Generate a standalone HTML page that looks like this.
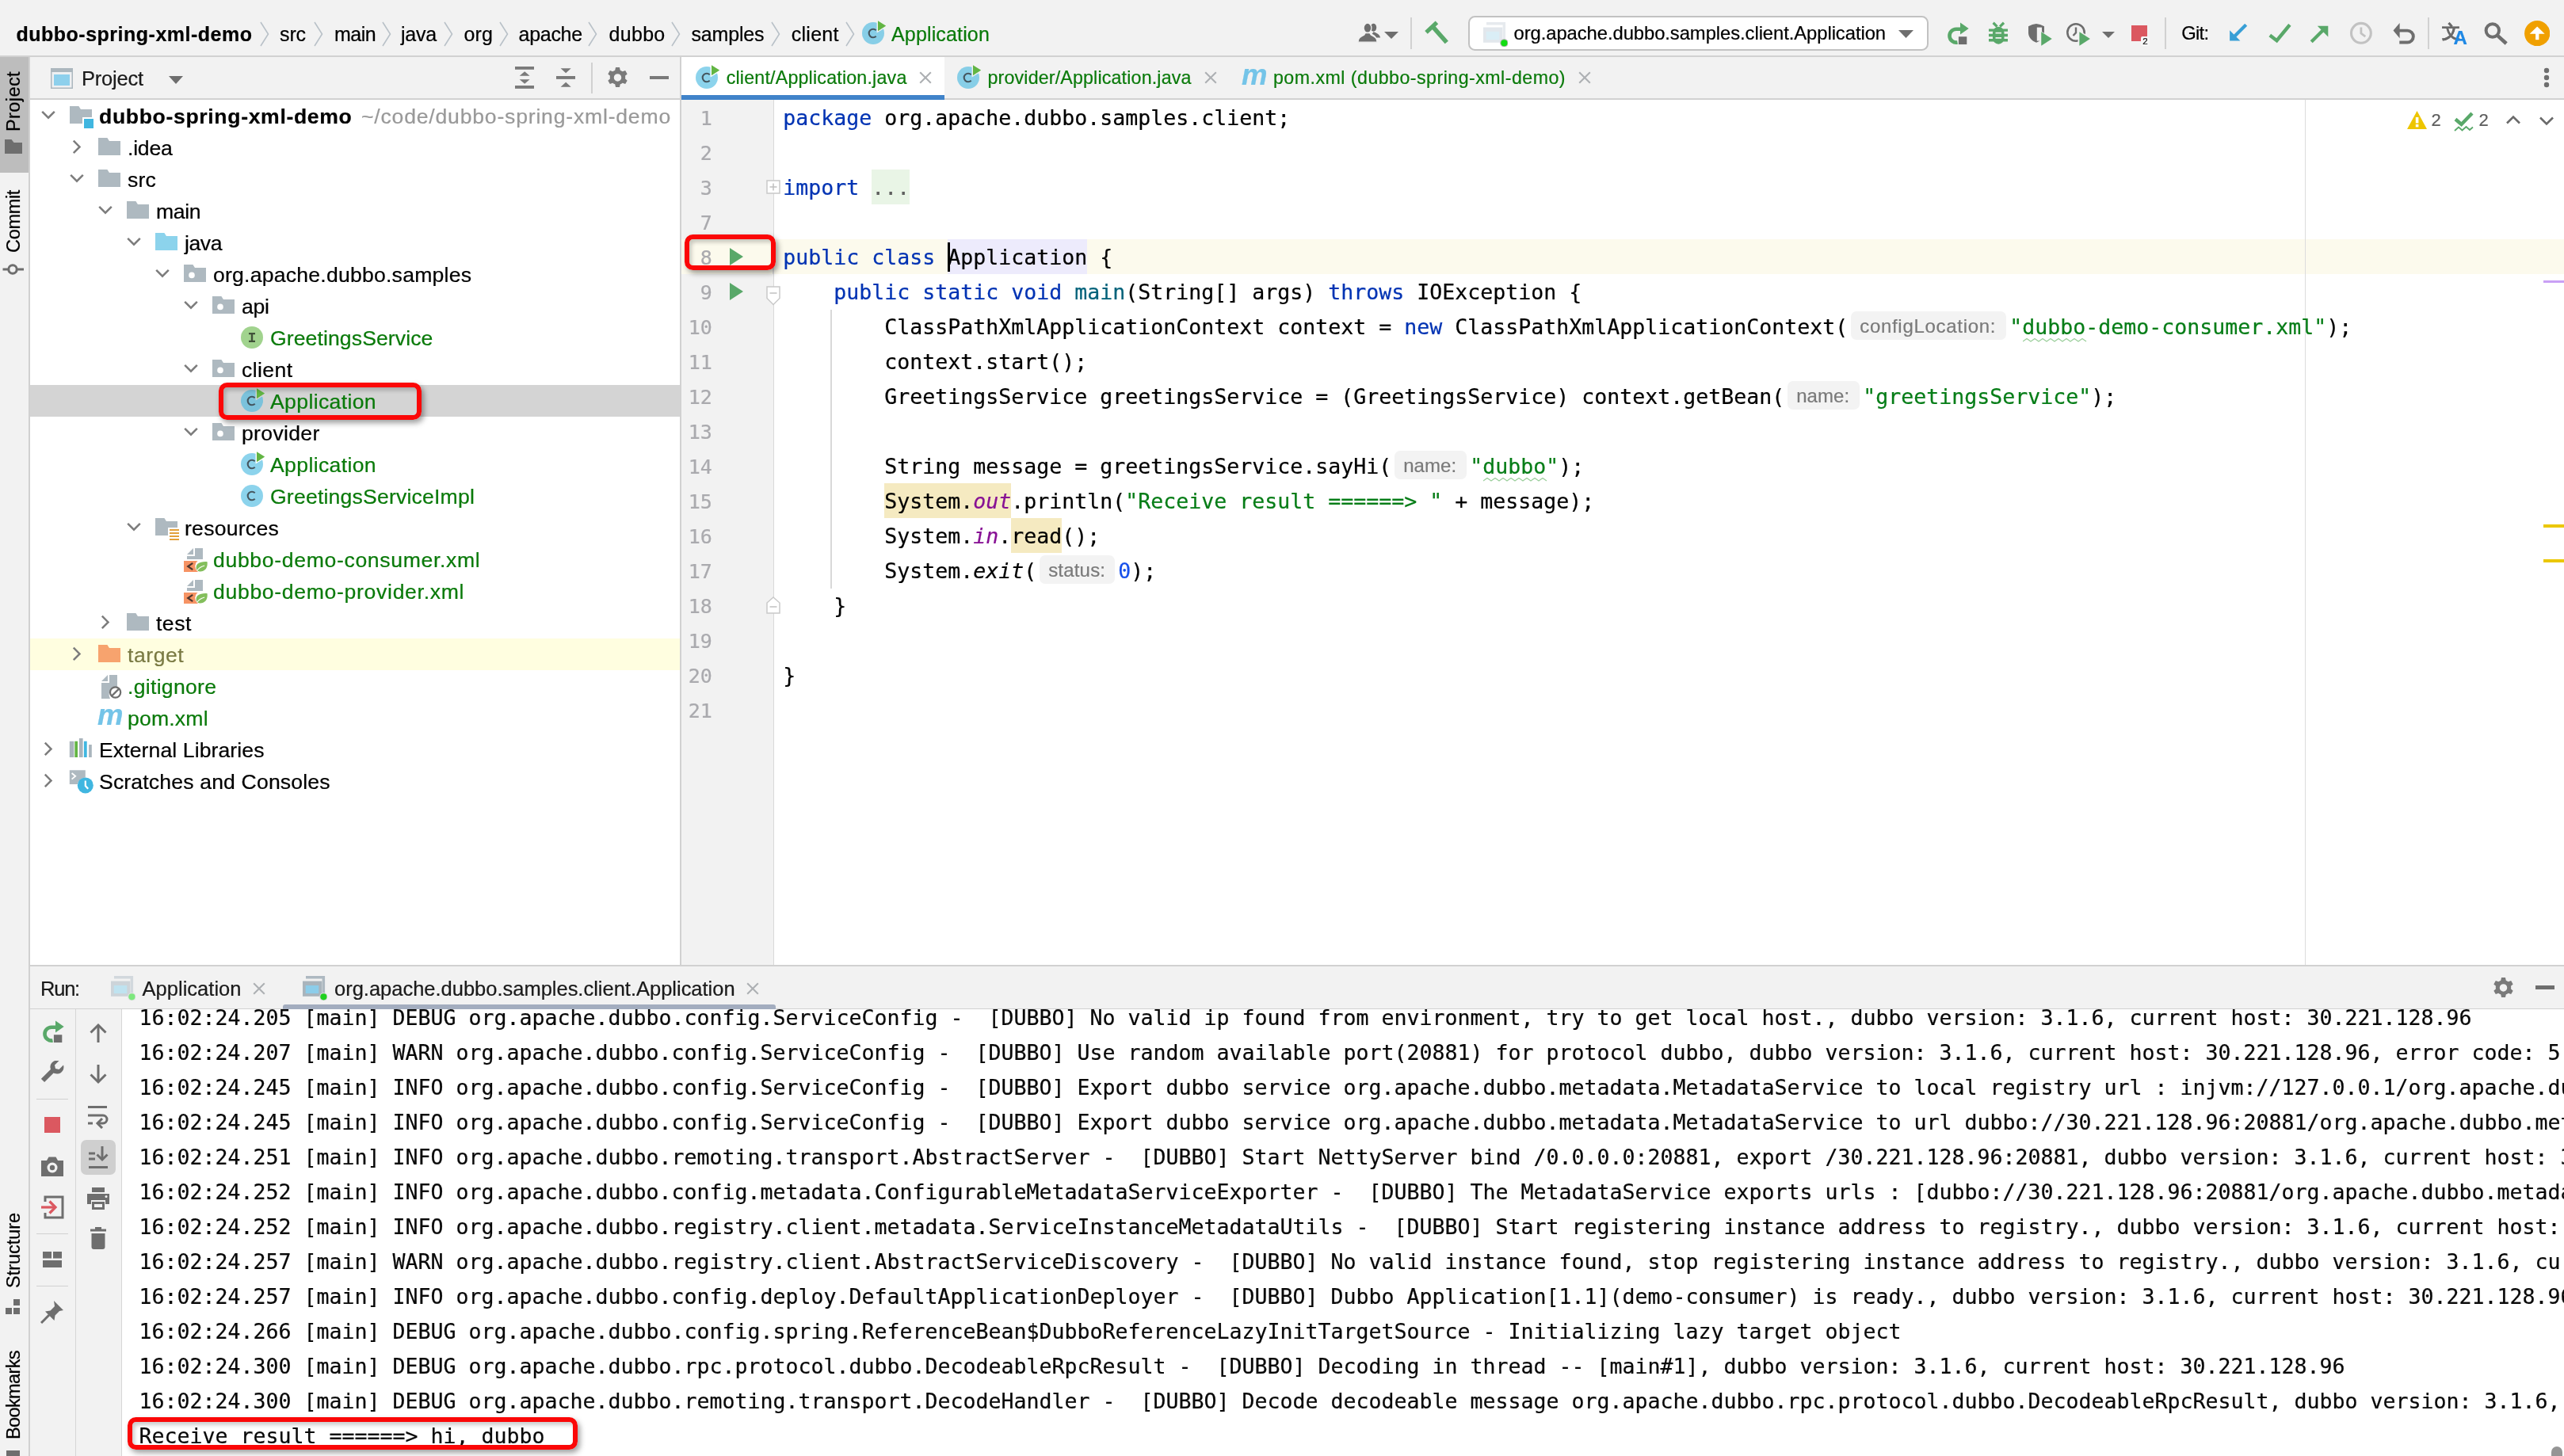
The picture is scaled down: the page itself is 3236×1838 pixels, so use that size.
<!DOCTYPE html>
<html lang="en"><head><meta charset="utf-8"><title>dubbo-spring-xml-demo – Application.java</title>
<style>
html,body{margin:0;padding:0}
body{width:3236px;height:1838px;position:relative;overflow:hidden;background:#fff;font-family:"Liberation Sans", Arial, sans-serif;color:#000}
div,span,svg,header,nav,aside,main,section{position:absolute;box-sizing:border-box}
header,nav,aside,main,section{left:0;top:0;width:0;height:0}
span{white-space:pre;-webkit-text-stroke:.22px}
.s{font-family:"Liberation Sans", Arial, sans-serif}
.m{font-family:"DejaVu Sans Mono", "Liberation Mono", monospace}
.app{left:0;top:0;width:3236px;height:1838px;overflow:hidden;will-change:transform}
.redbox{border:6px solid #fb0707;border-radius:10.500px;box-shadow:3px 4px 7px rgba(0,0,0,.38), inset 3px 4px 5px rgba(0,0,0,.2)}
.hint{background:#f3f3f3;border-radius:7px}
</style></head>
<body>
<svg width="0" height="0" style="position:absolute;left:-10px;top:-10px"><defs><mask id="mkRun" maskUnits="userSpaceOnUse" x="0" y="0" width="16" height="16"><rect width="16" height="16" fill="#fff"/><path d="M10.3 -1.1L17.4 3.35L10.3 7.8z" fill="#000"/></mask><symbol id="folder" viewBox="0 0 16 16"><path fill="#9AA7B0" fill-opacity=".8" d="M1 13h14V4H7.98L6.7 2H1z"/></symbol><symbol id="folderBlue" viewBox="0 0 16 16"><path fill="#40B6E0" fill-opacity=".6" d="M1 13h14V4H7.98L6.7 2H1z"/></symbol><symbol id="folderOrange" viewBox="0 0 16 16"><path fill="#F26522" fill-opacity=".6" d="M1 13h14V4H7.98L6.7 2H1z"/></symbol><symbol id="pkg" viewBox="0 0 16 16"><path fill="#9AA7B0" fill-opacity=".8" fill-rule="evenodd" d="M1 13h14V4H7.98L6.7 2H1zM6 10.6a1.9 1.9 0 1 0 0-3.8a1.9 1.9 0 0 0 0 3.8z"/></symbol><symbol id="module" viewBox="0 0 16 16"><path fill="#9AA7B0" fill-opacity=".8" d="M1 13h8V9h6V4H7.98L6.7 2H1z"/><rect x="10" y="10" width="6" height="6" fill="#40B6E0"/></symbol><symbol id="res" viewBox="0 0 16 16"><path fill="#9AA7B0" fill-opacity=".8" d="M1 13h8V8h6V4H7.98L6.7 2H1z"/><path fill="#E2A03B" d="M10 9h6v1h-6zM10 11h6v1h-6zM10 13h6v1h-6zM10 15h6v1h-6z"/></symbol><symbol id="cls" viewBox="0 0 16 16"><circle cx="8" cy="8" r="7" fill="#40B6E0" fill-opacity=".6"/><path d="M9.85 6.1A2.65 2.65 0 1 0 9.85 9.9" fill="none" stroke="#3a4147" stroke-opacity=".85" stroke-width="1.05"/></symbol><symbol id="clsRun" viewBox="0 0 16 16"><g mask="url(#mkRun)"><circle cx="8" cy="8" r="7" fill="#40B6E0" fill-opacity=".6"/><path d="M9.85 6.1A2.65 2.65 0 1 0 9.85 9.9" fill="none" stroke="#3a4147" stroke-opacity=".85" stroke-width="1.05"/></g><path d="M11 0.1L16.1 3.35L11 6.6z" fill="#62B543"/></symbol><symbol id="iface" viewBox="0 0 16 16"><circle cx="8" cy="8" r="7" fill="#62B543" fill-opacity=".6"/><path d="M6 5h4v1.1H8.6v3.8H10V11H6V9.9h1.4V6.1H6z" fill="#2f3b2a" fill-opacity=".85"/></symbol><symbol id="chevD" viewBox="0 0 16 16"><path d="M4.1 5.45L8 9.35L11.9 5.45" fill="none" stroke="#7c7c7c" stroke-width="1.25"/></symbol><symbol id="chevR" viewBox="0 0 16 16"><path d="M5.9 3.85L9.75 7.7L5.9 11.55" fill="none" stroke="#7c7c7c" stroke-width="1.25"/></symbol><symbol id="closeX" viewBox="0 0 16 16"><path d="M4.6 4.6l6.8 6.8M11.4 4.6l-6.8 6.8" fill="none" stroke="#adb0b3" stroke-width="1.05"/></symbol><symbol id="xmlSpring" viewBox="0 0 16 16"><path fill="#9AA7B0" fill-opacity=".8" d="M7 1L3 5h4zM8 1v5H3v2h10V1z"/><rect x="1" y="9" width="9" height="7" fill="#F26522" fill-opacity=".7"/><path d="M6.6 10.4L3.6 12.5L6.6 14.6" fill="none" stroke="#231F20" stroke-opacity=".8" stroke-width="1.1"/><circle cx="12.3" cy="12.4" r="4.2" fill="#fff"/><path d="M8.9 14.2c-.6-2.6 1.2-5 6.9-4.6c.4 3.6-1.2 6.2-4.6 6.1c-1 0-1.8-.5-2.3-1.500z" fill="#6DB33F" fill-opacity=".85"/><path d="M9.3 15c1.200-1.500 2.800-2.500 4.800-3" stroke="#fff" stroke-width=".6" fill="none"/></symbol><symbol id="gitignore" viewBox="0 0 16 16"><path fill="#9AA7B0" fill-opacity=".8" d="M7 1L3 5h4zM8 1v5H3v10h5.500a4.600 4.600 0 0 1 4.500-6.900V1z"/><circle cx="11.800" cy="12" r="3.300" fill="none" stroke="#6E6E6E" stroke-width="1.100"/><path d="M9.500 14.300l4.600-4.600" stroke="#6E6E6E" stroke-width="1.100"/></symbol><symbol id="libs" viewBox="0 0 16 16"><path fill="#9AA7B0" fill-opacity=".85" d="M0.900 2.850h2.800V13H0.900zM6.950 1h2.350v12H6.950zM13.050 5h1.850v8h-1.850z"/><path fill="#62B543" d="M4.150 2.850H6V13H4.150z"/><path fill="#40B6E0" d="M9.950 2.850h1.900V13h-1.900z"/></symbol><symbol id="scratch" viewBox="0 0 16 16"><path fill="#9AA7B0" fill-opacity=".8" d="M0.900 1.100h10V5.700a5 5 0 0 0-4.900 4.300H0.900z"/><path d="M2.300 3l2.300 1.900l-2.300 1.900" fill="none" stroke="#fff" stroke-width=".9"/><circle cx="10.900" cy="10.700" r="5" fill="#40B6E0"/><path d="M10.900 7.800v3.200l1.700 1.900" fill="none" stroke="#fff" stroke-width="1.100"/></symbol><symbol id="runCfg" viewBox="0 0 16 16"><path d="M2.500 0.550H14.550V11.700H12.800V2.300H2.500z" fill="#AEB9C1"/><path d="M0.500 3.750H12.650V13.400H0.500z" fill="#A9B4BC"/><rect x="2.350" y="6.450" width="8.300" height="5.100" fill="#8CCDEA"/><circle cx="13.700" cy="13.650" r="2.600" fill="#d9dadb"/><circle cx="13.700" cy="13.650" r="2.050" fill="#1FD01F"/></symbol><symbol id="runCfgPale" viewBox="0 0 16 16"><path d="M2.500 0.550H14.550V11.700H12.800V2.300H2.500z" fill="#D2D8DD"/><path d="M0.500 3.750H12.650V13.400H0.500z" fill="#CDD4D9"/><rect x="2.350" y="6.450" width="8.300" height="5.100" fill="#BFE3F0"/><circle cx="13.700" cy="13.650" r="2.600" fill="#e1e2e3"/><circle cx="13.700" cy="13.650" r="2.050" fill="#7EE87E"/></symbol><symbol id="runCfgDim" viewBox="0 0 16 16"><path d="M2.500 0.550H14.550V11.700H12.800V2.300H2.500z" fill="#E6EAEE"/><path d="M0.500 3.750H12.650V13.400H0.500z" fill="#E2E7EC"/><rect x="2.350" y="6.450" width="8.300" height="5.100" fill="#DAEEF6"/><circle cx="13.700" cy="13.650" r="2.600" fill="#b9b9b9"/><circle cx="13.700" cy="13.650" r="2.050" fill="#12DD12"/></symbol><symbol id="gear" viewBox="0 0 16 16"><path fill="#7a7a7a" fill-rule="evenodd" d="M9.200 1.500l.4 1.800c.5.2 1 .4 1.400.8l1.700-.6l1.200 2.100l-1.300 1.200c.1.300.1.500.1.800s0 .5-.1.800l1.300 1.200l-1.200 2.100l-1.700-.6c-.4.400-.9.600-1.400.8l-.4 1.800H6.800l-.4-1.800c-.5-.2-1-.4-1.400-.8l-1.700.6l-1.200-2.100l1.300-1.200C3.300 8.100 3.300 7.900 3.300 7.600s0-.5.1-.8L2.100 5.600l1.200-2.100l1.700.6c.4-.4.900-.6 1.400-.8l.4-1.800zM8 10.100a2.300 2.300 0 1 0 0-4.600a2.300 2.300 0 0 0 0 4.600z" transform="translate(0 .4)"/></symbol><symbol id="minus" viewBox="0 0 16 16"><rect x="2" y="7.300" width="12" height="1.500" fill="#6E6E6E"/></symbol></defs></svg>
<div class="app"><header id="navbar"><div style="left:0px;top:0px;width:3236px;height:72px;background:#f2f2f2;border-bottom:2px solid #d1d1d1;"></div><span class="s" id="t1" style="left:20.5px;top:27.84px;font-size:25px;line-height:31px;font-weight:bold;letter-spacing:0.501px;">dubbo-spring-xml-demo</span><span class="s" id="t2" style="left:353px;top:27.84px;font-size:25px;line-height:31px;letter-spacing:-0.109px;">src</span><span class="s" id="t3" style="left:422px;top:27.84px;font-size:25px;line-height:31px;letter-spacing:-0.547px;">main</span><span class="s" id="t4" style="left:506px;top:27.84px;font-size:25px;line-height:31px;letter-spacing:-0.219px;">java</span><span class="s" id="t5" style="left:585.5px;top:27.84px;font-size:25px;line-height:31px;letter-spacing:0.120px;">org</span><span class="s" id="t6" style="left:654.6px;top:27.84px;font-size:25px;line-height:31px;letter-spacing:-0.305px;">apache</span><span class="s" id="t7" style="left:768.5px;top:27.84px;font-size:25px;line-height:31px;letter-spacing:0.314px;">dubbo</span><span class="s" id="t8" style="left:872.4px;top:27.84px;font-size:25px;line-height:31px;letter-spacing:-0.156px;">samples</span><span class="s" id="t9" style="left:998.8px;top:27.84px;font-size:25px;line-height:31px;letter-spacing:0.254px;">client</span><svg style="left:327.5px;top:27px;" width="12" height="32" viewBox="0 0 12 32"><path d="M1 1L10.500 16L1 31" fill="none" stroke="#b9c1c8" stroke-width="1.600"/></svg><svg style="left:396px;top:27px;" width="12" height="32" viewBox="0 0 12 32"><path d="M1 1L10.500 16L1 31" fill="none" stroke="#b9c1c8" stroke-width="1.600"/></svg><svg style="left:481.5px;top:27px;" width="12" height="32" viewBox="0 0 12 32"><path d="M1 1L10.500 16L1 31" fill="none" stroke="#b9c1c8" stroke-width="1.600"/></svg><svg style="left:559.5px;top:27px;" width="12" height="32" viewBox="0 0 12 32"><path d="M1 1L10.500 16L1 31" fill="none" stroke="#b9c1c8" stroke-width="1.600"/></svg><svg style="left:629.5px;top:27px;" width="12" height="32" viewBox="0 0 12 32"><path d="M1 1L10.500 16L1 31" fill="none" stroke="#b9c1c8" stroke-width="1.600"/></svg><svg style="left:742px;top:27px;" width="12" height="32" viewBox="0 0 12 32"><path d="M1 1L10.500 16L1 31" fill="none" stroke="#b9c1c8" stroke-width="1.600"/></svg><svg style="left:846.5px;top:27px;" width="12" height="32" viewBox="0 0 12 32"><path d="M1 1L10.500 16L1 31" fill="none" stroke="#b9c1c8" stroke-width="1.600"/></svg><svg style="left:972.9px;top:27px;" width="12" height="32" viewBox="0 0 12 32"><path d="M1 1L10.500 16L1 31" fill="none" stroke="#b9c1c8" stroke-width="1.600"/></svg><svg style="left:1066.5px;top:27px;" width="12" height="32" viewBox="0 0 12 32"><path d="M1 1L10.500 16L1 31" fill="none" stroke="#b9c1c8" stroke-width="1.600"/></svg><svg style="left:1086px;top:26px" width="32" height="32"><use href="#clsRun"/></svg><span class="s" id="t10" style="left:1125px;top:27.84px;font-size:25px;line-height:31px;color:#0a7a0a;letter-spacing:0.153px;">Application</span><svg style="left:1712px;top:26px;" width="32" height="32" viewBox="0 0 32 32"><g fill="#6E6E6E"><ellipse cx="21.500" cy="8.800" rx="3.700" ry="5"/><path d="M21.500 14.200c4.500 1.600 8 3.200 8.600 7.400h-5c-1-2.400-2.800-3.800-5.400-4.900z"/></g><g fill="#6E6E6E" stroke="#f2f2f2" stroke-width="1.300"><ellipse cx="14" cy="9.300" rx="4.900" ry="6.100"/><path d="M1.900 27.200c0-5 3-7 8-9.400l1.400-2.300h5.400l1.400 2.300c5 2.400 8 4.400 8 9.400z"/></g></svg><svg style="left:1747px;top:40px;" width="18" height="9" viewBox="0 0 18 9"><path d="M0 0h18l-9 9z" fill="#6E6E6E"/></svg><div style="left:1780px;top:22px;width:2px;height:39.5px;background:#d1d1d1;"></div><svg style="left:1796px;top:26px;" width="34" height="32" viewBox="0 0 34 32"><path d="M4 14.900L17.400 2.400" stroke="#59A869" stroke-width="5.200" fill="none"/><path d="M12.900 8.300L29.800 27.500" stroke="#59A869" stroke-width="5.600" fill="none"/></svg><div style="left:1852.5px;top:20px;width:581px;height:44px;background:#fff;border:2px solid #c2c2c2;border-radius:8.500px;"></div><svg style="left:1871px;top:26.8px" width="32" height="32"><use href="#runCfgDim"/></svg><span class="s" id="t11" style="left:1910.5px;top:27.25px;font-size:23.8px;line-height:30px;letter-spacing:-0.065px;">org.apache.dubbo.samples.client.Application</span><svg style="left:2396px;top:38px;" width="19" height="10" viewBox="0 0 19 10"><path d="M0 0h19l-9.500 10z" fill="#6E6E6E"/></svg><svg style="left:2456px;top:27px;" width="32" height="32" viewBox="0 0 32 32"><path d="M18.500 9.750H12.900A8.450 8.450 0 1 0 14.500 26.500" fill="none" stroke="#59A869" stroke-width="4.600"/><path d="M18 1.500L28.700 9L18 16.500z" fill="#59A869"/><rect x="15.900" y="19.250" width="10.400" height="9.800" fill="#6E6E6E"/></svg><svg style="left:2507px;top:26px;" width="32" height="32" viewBox="0 0 32 32"><g fill="#59A869"><path d="M8 15a7.250 7.250 0 0 1 14.500 0v7.500a7.250 7.250 0 0 1-14.500 0z"/><path d="M3 10.500h24v3.300H3zM3 16.800h24v3.400H3zM3 23h24v3.400H3z"/></g><path d="M8.600 2.750L13.500 7.600M22 2.750L17.100 7.600" stroke="#59A869" stroke-width="3.200" fill="none"/><path d="M11.500 14.700h7.500v1.700h-7.500zM11.500 21h7.500v1.700h-7.500z" fill="#f2f2f2"/></svg><svg style="left:2558px;top:26px;" width="34" height="34" viewBox="0 0 34 34"><path d="M2 7.200Q7 4.300 12 4Q17 4.300 22 7.200V15c0 6-4 10.500-10 12.800C6 25.500 2 21 2 15z" fill="#6E6E6E"/><path d="M12.800 8.600h6.200v17h-6.200z" fill="#f2f2f2"/><path d="M16.500 12.500L33.500 23L16.500 33.500z" fill="#f2f2f2"/><path d="M18.250 14.200L31.750 23L18.250 31.800z" fill="#59A869"/></svg><svg style="left:2607px;top:26px;" width="34" height="34" viewBox="0 0 34 34"><circle cx="13" cy="15" r="10.700" fill="none" stroke="#6E6E6E" stroke-width="2.600"/><path d="M13 8.500V15.300L9.500 19" fill="none" stroke="#6E6E6E" stroke-width="2.400"/><path d="M15.500 11.500L34 23L15.500 34z" fill="#f2f2f2"/><path d="M17.400 14.200L30.900 23L17.400 31.800z" fill="#59A869"/></svg><svg style="left:2652.5px;top:40px;" width="16" height="8" viewBox="0 0 16 8"><path d="M0 0h16l-8 8z" fill="#6E6E6E"/></svg><div style="left:2690.3px;top:32.25px;width:19.7px;height:19.7px;background:#DB5860;"></div><div style="left:2702px;top:45.5px;width:11px;height:12px;background:#f7f7f7;border-radius:2px;"></div><span class="s" style="left:2704.3px;top:44.62px;font-size:11.5px;line-height:14px;color:#111;">2</span><div style="left:2732px;top:22px;width:2px;height:39.5px;background:#d1d1d1;"></div><span class="s" id="t12" style="left:2753.2px;top:26.75px;font-size:23.8px;line-height:30px;letter-spacing:-0.708px;">Git:</span><svg style="left:2812px;top:30px;" width="26" height="26" viewBox="0 0 26 26"><path d="M22.700 1.300L8 16" stroke="#389FD6" stroke-width="4.200" fill="none"/><path d="M2.100 8.300V21.600H15.400z" fill="#389FD6"/></svg><svg style="left:2863px;top:30px;" width="30" height="26" viewBox="0 0 30 26"><path d="M1.800 14.600L10.500 21.200L26.900 1.300" stroke="#59A869" stroke-width="4.400" fill="none"/></svg><svg style="left:2915px;top:30px;" width="26" height="26" viewBox="0 0 26 26"><path d="M2.200 22.700L17 8" stroke="#59A869" stroke-width="4.200" fill="none"/><path d="M9.800 2.800H23.300V16.400z" fill="#59A869"/></svg><svg style="left:2964px;top:26px;" width="32" height="32" viewBox="0 0 32 32"><circle cx="15.900" cy="15.800" r="12.400" fill="none" stroke="#c2c2c2" stroke-width="3.100"/><path d="M15.900 8.500v7.600l5.400 4" fill="none" stroke="#c2c2c2" stroke-width="2.800"/></svg><svg style="left:3018px;top:26px;" width="32" height="32" viewBox="0 0 32 32"><path d="M10 12.600h10.400a7.450 7.450 0 0 1 0 14.900H10.300" fill="none" stroke="#6E6E6E" stroke-width="3.900"/><path d="M2.500 12.600L10.600 3V22.200z" fill="#6E6E6E"/></svg><div style="left:3064px;top:22px;width:2px;height:39.5px;background:#d1d1d1;"></div><span class="s" style="left:3081.5px;top:26.03px;font-size:23px;line-height:29px;color:#6a6a6a;font-weight:bold;font-family:"Noto Sans CJK SC","Liberation Sans",sans-serif;">文</span><span class="s" style="left:3096.5px;top:32.68px;font-size:24px;line-height:30px;color:#1e88e5;font-weight:bold;">A</span><svg style="left:3133px;top:26px;" width="32" height="32" viewBox="0 0 32 32"><circle cx="12.800" cy="12.500" r="8.200" fill="none" stroke="#6E6E6E" stroke-width="4"/><path d="M18.800 18.600L30.200 29" stroke="#6E6E6E" stroke-width="4.600"/></svg><svg style="left:3186px;top:25.8px;" width="32.4" height="32.4" viewBox="0 0 32.4 32.4"><circle cx="16.200" cy="16.200" r="16.100" fill="#F0A000"/><path d="M14.100 13.200h4.300v11h-4.300z" fill="#fff"/><path d="M6.700 16.700L16.200 7.400L25.700 16.700z" fill="#fff"/></svg></header>
<nav id="left-stripe"><div style="left:0px;top:72px;width:38px;height:1766px;background:#f2f2f2;border-right:2px solid #d1d1d1;"></div><div style="left:0px;top:72px;width:36px;height:146px;background:#bdbdbd;"></div><span class="s" id="t13" style="left:1.500px;top:166px;font-size:23.5px;line-height:30px;transform-origin:0 0;transform:rotate(-90deg);letter-spacing:0.408px;">Project</span><svg style="left:6px;top:176px;" width="22" height="18" viewBox="0 0 22 18"><path d="M0 0h8.500l3 4H22v14H0z" fill="#6E6E6E"/></svg><span class="s" id="t14" style="left:1.500px;top:319px;font-size:23.5px;line-height:30px;transform-origin:0 0;transform:rotate(-90deg);letter-spacing:-0.326px;">Commit</span><svg style="left:3px;top:330px;" width="30" height="22" viewBox="0 0 30 22"><circle cx="13" cy="10" r="5.200" fill="none" stroke="#6E6E6E" stroke-width="3"/><path d="M0.500 10h7.300M18.200 10h8.800" stroke="#6E6E6E" stroke-width="3"/></svg><span class="s" id="t15" style="left:1.500px;top:1626px;font-size:23.5px;line-height:30px;transform-origin:0 0;transform:rotate(-90deg);letter-spacing:-0.038px;">Structure</span><svg style="left:7px;top:1640px;" width="20" height="20" viewBox="0 0 20 20"><g fill="#6E6E6E"><rect x="10" y="0" width="8" height="8"/><rect x="0" y="11" width="8" height="8"/><rect x="10" y="11" width="8" height="8"/></g></svg><span class="s" id="t16" style="left:1.500px;top:1817px;font-size:23.5px;line-height:30px;transform-origin:0 0;transform:rotate(-90deg);letter-spacing:-0.616px;">Bookmarks</span><svg style="left:7px;top:1831px;" width="20" height="10" viewBox="0 0 20 10"><rect x="1" y="0" width="17" height="10" fill="#6E6E6E"/></svg></nav>
<aside id="project-view"><div style="left:38px;top:72px;width:820px;height:54px;background:#f2f2f2;border-bottom:2px solid #d1d1d1;"></div><svg style="left:64px;top:86px;" width="28" height="26" viewBox="0 0 28 26"><rect x="0" y="0" width="28" height="26" fill="#9AA7B0" fill-opacity=".8"/><rect x="1.500" y="5" width="25" height="19.500" fill="#eef0f2"/><rect x="4" y="8" width="20" height="14" fill="#8dd0ec"/></svg><span class="s" id="t17" style="left:103px;top:82.66px;font-size:25.5px;line-height:32px;color:#1a1a1a;letter-spacing:-0.196px;">Project</span><svg style="left:213px;top:96px;" width="18" height="10" viewBox="0 0 18 10"><path d="M0 0h18l-9 10z" fill="#6E6E6E"/></svg><svg style="left:650px;top:83px;" width="24" height="30" viewBox="0 0 24 30"><g fill="#7a7a7a"><rect x="0" y="1" width="24" height="3.800"/><rect x="0" y="25" width="24" height="3.900"/><path d="M5.700 12.700L12.150 7.200L18.600 12.700zM5.700 17.200L12.150 22.700L18.600 17.200z"/></g></svg><svg style="left:702px;top:85px;" width="24" height="26" viewBox="0 0 24 26"><g fill="#7a7a7a"><rect x="0" y="11" width="24" height="3.900"/><path d="M5.600 1.200H18.700L12.150 7.200zM5.600 24.700H18.700L12.150 18.700z"/></g></svg><div style="left:746px;top:79px;width:2px;height:39px;background:#d1d1d1;"></div><svg style="left:763.4px;top:81px" width="33" height="33"><use href="#gear"/></svg><div style="left:820px;top:95.7px;width:24px;height:4.3px;background:#7a7a7a;"></div><div style="left:38px;top:126px;width:820px;height:1092px;background:#fff;"></div><svg style="left:45px;top:130px" width="32" height="32"><use href="#chevD"/></svg><svg style="left:86px;top:130px" width="32" height="32"><use href="#module"/></svg><span class="s" id="t18" style="left:125px;top:130.58px;font-size:26.6px;line-height:33px;font-weight:bold;letter-spacing:0.652px;">dubbo-spring-xml-demo</span><span class="s" id="t19" style="left:456px;top:130.58px;font-size:26.6px;line-height:33px;color:#999;letter-spacing:0.792px;">~/code/dubbo-spring-xml-demo</span><svg style="left:81px;top:170px" width="32" height="32"><use href="#chevR"/></svg><svg style="left:122px;top:170px" width="32" height="32"><use href="#folder"/></svg><span class="s" id="t20" style="left:161px;top:170.58px;font-size:26.6px;line-height:33px;letter-spacing:-0.234px;">.idea</span><svg style="left:81px;top:210px" width="32" height="32"><use href="#chevD"/></svg><svg style="left:122px;top:210px" width="32" height="32"><use href="#folder"/></svg><span class="s" id="t21" style="left:161px;top:210.58px;font-size:26.6px;line-height:33px;letter-spacing:0.182px;">src</span><svg style="left:117px;top:250px" width="32" height="32"><use href="#chevD"/></svg><svg style="left:158px;top:250px" width="32" height="32"><use href="#folder"/></svg><span class="s" id="t22" style="left:197px;top:250.58px;font-size:26.6px;line-height:33px;letter-spacing:-0.364px;">main</span><svg style="left:153px;top:290px" width="32" height="32"><use href="#chevD"/></svg><svg style="left:194px;top:290px" width="32" height="32"><use href="#folderBlue"/></svg><span class="s" id="t23" style="left:233px;top:290.58px;font-size:26.6px;line-height:33px;letter-spacing:-0.449px;">java</span><svg style="left:189px;top:330px" width="32" height="32"><use href="#chevD"/></svg><svg style="left:230px;top:330px" width="32" height="32"><use href="#pkg"/></svg><span class="s" id="t24" style="left:269px;top:330.58px;font-size:26.6px;line-height:33px;letter-spacing:0.224px;">org.apache.dubbo.samples</span><svg style="left:225px;top:370px" width="32" height="32"><use href="#chevD"/></svg><svg style="left:266px;top:370px" width="32" height="32"><use href="#pkg"/></svg><span class="s" id="t25" style="left:305px;top:370.58px;font-size:26.6px;line-height:33px;letter-spacing:-0.333px;">api</span><svg style="left:302px;top:410px" width="32" height="32"><use href="#iface"/></svg><span class="s" id="t26" style="left:341px;top:410.58px;font-size:26.6px;line-height:33px;color:#0a7a0a;letter-spacing:0.095px;">GreetingsService</span><svg style="left:225px;top:450px" width="32" height="32"><use href="#chevD"/></svg><svg style="left:266px;top:450px" width="32" height="32"><use href="#pkg"/></svg><span class="s" id="t27" style="left:305px;top:450.58px;font-size:26.6px;line-height:33px;letter-spacing:0.401px;">client</span><div style="left:38px;top:486px;width:820px;height:40px;background:#d4d4d4;"></div><svg style="left:302px;top:490px" width="32" height="32"><use href="#clsRun"/></svg><span class="s" id="t28" style="left:341px;top:490.58px;font-size:26.6px;line-height:33px;color:#0a7a0a;letter-spacing:0.354px;">Application</span><svg style="left:225px;top:530px" width="32" height="32"><use href="#chevD"/></svg><svg style="left:266px;top:530px" width="32" height="32"><use href="#pkg"/></svg><span class="s" id="t29" style="left:305px;top:530.58px;font-size:26.6px;line-height:33px;letter-spacing:0.315px;">provider</span><svg style="left:302px;top:570px" width="32" height="32"><use href="#clsRun"/></svg><span class="s" id="t30" style="left:341px;top:570.58px;font-size:26.6px;line-height:33px;color:#0a7a0a;letter-spacing:0.354px;">Application</span><svg style="left:302px;top:610px" width="32" height="32"><use href="#cls"/></svg><span class="s" id="t31" style="left:341px;top:610.58px;font-size:26.6px;line-height:33px;color:#0a7a0a;letter-spacing:0.189px;">GreetingsServiceImpl</span><svg style="left:153px;top:650px" width="32" height="32"><use href="#chevD"/></svg><svg style="left:194px;top:650px" width="32" height="32"><use href="#res"/></svg><span class="s" id="t32" style="left:233px;top:650.58px;font-size:26.6px;line-height:33px;letter-spacing:0.248px;">resources</span><svg style="left:230px;top:690px" width="32" height="32"><use href="#xmlSpring"/></svg><span class="s" id="t33" style="left:269px;top:690.58px;font-size:26.6px;line-height:33px;color:#0a7a0a;letter-spacing:0.659px;">dubbo-demo-consumer.xml</span><svg style="left:230px;top:730px" width="32" height="32"><use href="#xmlSpring"/></svg><span class="s" id="t34" style="left:269px;top:730.58px;font-size:26.6px;line-height:33px;color:#0a7a0a;letter-spacing:0.676px;">dubbo-demo-provider.xml</span><svg style="left:117px;top:770px" width="32" height="32"><use href="#chevR"/></svg><svg style="left:158px;top:770px" width="32" height="32"><use href="#folder"/></svg><span class="s" id="t35" style="left:197px;top:770.58px;font-size:26.6px;line-height:33px;letter-spacing:0.481px;">test</span><div style="left:38px;top:806px;width:820px;height:40px;background:#fffee0;"></div><svg style="left:81px;top:810px" width="32" height="32"><use href="#chevR"/></svg><svg style="left:122px;top:810px" width="32" height="32"><use href="#folderOrange"/></svg><span class="s" id="t36" style="left:161px;top:810.58px;font-size:26.6px;line-height:33px;color:#7a7a43;letter-spacing:0.547px;">target</span><svg style="left:122px;top:850px" width="32" height="32"><use href="#gitignore"/></svg><span class="s" id="t37" style="left:161px;top:850.58px;font-size:26.6px;line-height:33px;color:#0a7a0a;letter-spacing:0.289px;">.gitignore</span><span class="s" style="left:123px;top:880.35px;font-size:36.5px;line-height:46px;color:#74c4e8;font-weight:bold;font-style:italic;font-family:"DejaVu Sans","Liberation Sans",sans-serif;letter-spacing:-2px;">m</span><span class="s" id="t38" style="left:161px;top:890.58px;font-size:26.6px;line-height:33px;color:#0a7a0a;letter-spacing:0.188px;">pom.xml</span><svg style="left:45px;top:930px" width="32" height="32"><use href="#chevR"/></svg><svg style="left:86px;top:930px" width="32" height="32"><use href="#libs"/></svg><span class="s" id="t39" style="left:125px;top:930.58px;font-size:26.6px;line-height:33px;letter-spacing:0.092px;">External Libraries</span><svg style="left:45px;top:970px" width="32" height="32"><use href="#chevR"/></svg><svg style="left:86px;top:970px" width="32" height="32"><use href="#scratch"/></svg><span class="s" id="t40" style="left:125px;top:970.58px;font-size:26.6px;line-height:33px;letter-spacing:0.156px;">Scratches and Consoles</span><div class="redbox" style="left:275.8px;top:482.7px;width:256.6px;height:47px;"></div></aside>
<main id="editor"><div style="left:858px;top:72px;width:2378px;height:54px;background:#f2f2f2;border-bottom:2px solid #d1d1d1;border-left:2px solid #d1d1d1;"></div><div style="left:860px;top:72px;width:332px;height:48px;background:#fff;"></div><div style="left:860px;top:119.5px;width:332px;height:6px;background:#4083c9;"></div><svg style="left:876px;top:82px" width="32" height="32"><use href="#clsRun"/></svg><span class="s" id="t41" style="left:916.7px;top:84.46px;font-size:23.2px;line-height:29px;color:#0a7a0a;letter-spacing:0.209px;">client/Application.java</span><svg style="left:1152px;top:82px" width="32" height="32"><use href="#closeX"/></svg><svg style="left:1206px;top:82px" width="32" height="32"><use href="#clsRun"/></svg><span class="s" id="t42" style="left:1246.5px;top:84.46px;font-size:23.2px;line-height:29px;color:#0a7a0a;letter-spacing:0.178px;">provider/Application.java</span><svg style="left:1512px;top:82px" width="32" height="32"><use href="#closeX"/></svg><span class="s" style="left:1567px;top:72.35px;font-size:36.5px;line-height:46px;color:#74c4e8;font-weight:bold;font-style:italic;font-family:"DejaVu Sans","Liberation Sans",sans-serif;letter-spacing:-2px;">m</span><span class="s" id="t43" style="left:1607px;top:84.46px;font-size:23.2px;line-height:29px;color:#0a7a0a;letter-spacing:0.472px;">pom.xml (dubbo-spring-xml-demo)</span><svg style="left:1984px;top:82px" width="32" height="32"><use href="#closeX"/></svg><svg style="left:3209px;top:84px;" width="10" height="28" viewBox="0 0 10 28"><g fill="#6E6E6E"><circle cx="5" cy="5" r="3.200"/><circle cx="5" cy="14" r="3.200"/><circle cx="5" cy="23" r="3.200"/></g></svg><div style="left:858px;top:126px;width:2px;height:1092px;background:#d1d1d1;"></div><div style="left:860px;top:126px;width:116.8px;height:1092px;background:#f2f2f2;border-right:1.800px solid #d9d9d9;"></div><div style="left:860px;top:302.3px;width:2376px;height:44px;background:#fcfaed;"></div><div style="left:975px;top:302.3px;width:1.8px;height:44px;background:#d9d9d9;"></div><div style="left:2908.5px;top:126px;width:1.5px;height:1092px;background:#dcdcdc;"></div><div style="left:3210px;top:353.5px;width:26px;height:3.5px;background:#c9a0f5;"></div><div style="left:3210px;top:662px;width:26px;height:3.5px;background:#ebc700;"></div><div style="left:3210px;top:706px;width:26px;height:3.5px;background:#ebc700;"></div><svg style="left:3038px;top:140px;" width="25" height="23" viewBox="0 0 25 23"><path d="M12.500 0L25 23H0z" fill="#EDC500"/><rect x="10.800" y="8" width="3.600" height="7.500" fill="#fff"/><rect x="10.800" y="17" width="3.600" height="3.400" fill="#fff"/></svg><span class="s" style="left:3068.5px;top:137.88px;font-size:22px;line-height:28px;color:#5e5e5e;">2</span><svg style="left:3097px;top:141px;" width="26" height="26" viewBox="0 0 26 26"><path d="M2 9.500L9.500 16L23 2" fill="none" stroke="#59A869" stroke-width="4.400"/><path d="M1 24l5-4.500l4.500 4l5-4.500l4.500 4l4-3.500" fill="none" stroke="#59A869" stroke-width="1.800"/></svg><span class="s" style="left:3128.5px;top:137.88px;font-size:22px;line-height:28px;color:#5e5e5e;">2</span><svg style="left:3162px;top:144px;" width="20" height="14" viewBox="0 0 20 14"><path d="M2 11.500L10 3.500L18 11.500" fill="none" stroke="#6a6a6a" stroke-width="2.600"/></svg><svg style="left:3204px;top:146px;" width="20" height="14" viewBox="0 0 20 14"><path d="M2 2.500L10 10.500L18 2.500" fill="none" stroke="#6a6a6a" stroke-width="2.600"/></svg><span class="m" style="left:883.75px;top:133.85px;font-size:25px;line-height:31px;color:#aaaaae;">1</span><span class="m" style="left:883.75px;top:177.85px;font-size:25px;line-height:31px;color:#aaaaae;">2</span><span class="m" style="left:883.75px;top:221.85px;font-size:25px;line-height:31px;color:#aaaaae;">3</span><span class="m" style="left:883.75px;top:265.85px;font-size:25px;line-height:31px;color:#aaaaae;">7</span><span class="m" style="left:883.75px;top:309.85px;font-size:25px;line-height:31px;color:#aaaaae;">8</span><span class="m" style="left:883.75px;top:353.85px;font-size:25px;line-height:31px;color:#aaaaae;">9</span><span class="m" style="left:868.7px;top:397.85px;font-size:25px;line-height:31px;color:#aaaaae;">10</span><span class="m" style="left:868.7px;top:441.85px;font-size:25px;line-height:31px;color:#aaaaae;">11</span><span class="m" style="left:868.7px;top:485.85px;font-size:25px;line-height:31px;color:#aaaaae;">12</span><span class="m" style="left:868.7px;top:529.85px;font-size:25px;line-height:31px;color:#aaaaae;">13</span><span class="m" style="left:868.7px;top:573.85px;font-size:25px;line-height:31px;color:#aaaaae;">14</span><span class="m" style="left:868.7px;top:617.85px;font-size:25px;line-height:31px;color:#aaaaae;">15</span><span class="m" style="left:868.7px;top:661.85px;font-size:25px;line-height:31px;color:#aaaaae;">16</span><span class="m" style="left:868.7px;top:705.85px;font-size:25px;line-height:31px;color:#aaaaae;">17</span><span class="m" style="left:868.7px;top:749.85px;font-size:25px;line-height:31px;color:#aaaaae;">18</span><span class="m" style="left:868.7px;top:793.85px;font-size:25px;line-height:31px;color:#aaaaae;">19</span><span class="m" style="left:868.7px;top:837.85px;font-size:25px;line-height:31px;color:#aaaaae;">20</span><span class="m" style="left:868.7px;top:881.85px;font-size:25px;line-height:31px;color:#aaaaae;">21</span><span class="m" id="t44" style="left:988.2px;top:132.30px;font-size:26.58px;line-height:33px;color:#0033b3;letter-spacing:-0.002px;">package</span><span class="m" id="t45" style="left:1100.2px;top:132.30px;font-size:26.58px;line-height:33px;letter-spacing:-0.001px;"> org.apache.dubbo.samples.client;</span><span class="m" id="t46" style="left:988.2px;top:220.30px;font-size:26.58px;line-height:33px;color:#0033b3;letter-spacing:-0.003px;">import</span><div style="left:1100.2px;top:214.3px;width:48px;height:44px;background:#e9f5e6;"></div><span class="m" id="t47" style="left:1100.2px;top:220.30px;font-size:26.58px;line-height:33px;color:#5f5f5f;letter-spacing:-0.005px;">...</span><span class="m" id="t48" style="left:988.2px;top:308.30px;font-size:26.58px;line-height:33px;color:#0033b3;letter-spacing:-0.003px;">public</span><span class="m" id="t49" style="left:1100.2px;top:308.30px;font-size:26.58px;line-height:33px;color:#0033b3;letter-spacing:-0.003px;">class</span><div style="left:1196.2px;top:302.3px;width:176px;height:44px;background:#edebfc;"></div><span class="m" id="t50" style="left:1196.2px;top:308.30px;font-size:26.58px;line-height:33px;letter-spacing:-0.001px;">Application</span><span class="m" id="t51" style="left:1372.2px;top:308.30px;font-size:26.58px;line-height:33px;letter-spacing:-0.008px;"> {</span><span class="m" id="t52" style="left:1052.2px;top:352.30px;font-size:26.58px;line-height:33px;color:#0033b3;letter-spacing:-0.003px;">public</span><span class="m" id="t53" style="left:1164.2px;top:352.30px;font-size:26.58px;line-height:33px;color:#0033b3;letter-spacing:-0.003px;">static</span><span class="m" id="t54" style="left:1276.2px;top:352.30px;font-size:26.58px;line-height:33px;color:#0033b3;letter-spacing:-0.004px;">void</span><span class="m" id="t55" style="left:1356.2px;top:352.30px;font-size:26.58px;line-height:33px;color:#00627a;letter-spacing:-0.004px;">main</span><span class="m" id="t56" style="left:1420.2px;top:352.30px;font-size:26.58px;line-height:33px;letter-spacing:-0.002px;">(String[] args) </span><span class="m" id="t57" style="left:1676.2px;top:352.30px;font-size:26.58px;line-height:33px;color:#0033b3;letter-spacing:-0.003px;">throws</span><span class="m" id="t58" style="left:1772.2px;top:352.30px;font-size:26.58px;line-height:33px;letter-spacing:-0.002px;"> IOException {</span><span class="m" id="t59" style="left:988.2px;top:396.30px;font-size:26.58px;line-height:33px;letter-spacing:-0.002px;">        ClassPathXmlApplicationContext context = </span><span class="m" id="t60" style="left:1772.2px;top:396.30px;font-size:26.58px;line-height:33px;color:#0033b3;letter-spacing:-0.005px;">new</span><span class="m" id="t61" style="left:1820.2px;top:396.30px;font-size:26.58px;line-height:33px;letter-spacing:-0.001px;"> ClassPathXmlApplicationContext(</span><div class="hint" style="left:2335.7px;top:393px;width:196px;height:36px;"></div><span class="s" id="t62" style="left:2347.2px;top:396.88px;font-size:24px;line-height:30px;color:#7a7a7a;letter-spacing:0.703px;">configLocation:</span><span class="m" id="t63" style="left:2536.2px;top:396.30px;font-size:26.58px;line-height:33px;color:#067d17;letter-spacing:-0.002px;">"dubbo-demo-consumer.xml"</span><span class="m" id="t64" style="left:2936.2px;top:396.30px;font-size:26.58px;line-height:33px;letter-spacing:-0.008px;">);</span><span class="m" id="t65" style="left:988.2px;top:440.30px;font-size:26.58px;line-height:33px;letter-spacing:-0.002px;">        context.start();</span><span class="m" id="t66" style="left:988.2px;top:484.30px;font-size:26.58px;line-height:33px;letter-spacing:-0.002px;">        GreetingsService greetingsService = (GreetingsService) context.getBean(</span><div class="hint" style="left:2255.7px;top:481px;width:91px;height:36px;"></div><span class="s" id="t67" style="left:2267.2px;top:484.88px;font-size:24px;line-height:30px;color:#7a7a7a;letter-spacing:0.059px;">name:</span><span class="m" id="t68" style="left:2351.2px;top:484.30px;font-size:26.58px;line-height:33px;color:#067d17;letter-spacing:-0.002px;">"greetingsService"</span><span class="m" id="t69" style="left:2639.2px;top:484.30px;font-size:26.58px;line-height:33px;letter-spacing:-0.008px;">);</span><span class="m" id="t70" style="left:988.2px;top:572.30px;font-size:26.58px;line-height:33px;letter-spacing:-0.002px;">        String message = greetingsService.sayHi(</span><div class="hint" style="left:1759.7px;top:569px;width:91px;height:36px;"></div><span class="s" id="t71" style="left:1771.2px;top:572.88px;font-size:24px;line-height:30px;color:#7a7a7a;letter-spacing:0.059px;">name:</span><span class="m" id="t72" style="left:1855.2px;top:572.30px;font-size:26.58px;line-height:33px;color:#067d17;letter-spacing:-0.002px;">"dubbo"</span><span class="m" id="t73" style="left:1967.2px;top:572.30px;font-size:26.58px;line-height:33px;letter-spacing:-0.008px;">);</span><div style="left:1116.2px;top:610.3px;width:112px;height:44px;background:#f5eac1;"></div><span class="m" id="t74" style="left:1116.2px;top:616.30px;font-size:26.58px;line-height:33px;letter-spacing:-0.002px;">System.</span><div style="left:1228.2px;top:610.3px;width:48px;height:44px;background:#f5eac1;"></div><span class="m" id="t75" style="left:1228.2px;top:616.30px;font-size:26.58px;line-height:33px;color:#871094;font-style:italic;letter-spacing:-0.005px;">out</span><span class="m" id="t76" style="left:1276.2px;top:616.30px;font-size:26.58px;line-height:33px;letter-spacing:-0.002px;">.println(</span><span class="m" id="t77" style="left:1420.2px;top:616.30px;font-size:26.58px;line-height:33px;color:#067d17;letter-spacing:-0.002px;">"Receive result ======&gt; "</span><span class="m" id="t78" style="left:1820.2px;top:616.30px;font-size:26.58px;line-height:33px;letter-spacing:-0.003px;"> + message);</span><span class="m" id="t79" style="left:988.2px;top:660.30px;font-size:26.58px;line-height:33px;letter-spacing:-0.002px;">        System.</span><span class="m" id="t80" style="left:1228.2px;top:660.30px;font-size:26.58px;line-height:33px;color:#871094;font-style:italic;letter-spacing:-0.008px;">in</span><span class="m" id="t81" style="left:1260.2px;top:660.30px;font-size:26.58px;line-height:33px;letter-spacing:-0.016px;">.</span><div style="left:1276.2px;top:654.3px;width:64px;height:44px;background:#f5eac1;"></div><span class="m" id="t82" style="left:1276.2px;top:660.30px;font-size:26.58px;line-height:33px;letter-spacing:-0.004px;">read</span><span class="m" id="t83" style="left:1340.2px;top:660.30px;font-size:26.58px;line-height:33px;letter-spacing:-0.005px;">();</span><span class="m" id="t84" style="left:988.2px;top:704.30px;font-size:26.58px;line-height:33px;letter-spacing:-0.002px;">        System.</span><span class="m" id="t85" style="left:1228.2px;top:704.30px;font-size:26.58px;line-height:33px;font-style:italic;letter-spacing:-0.004px;">exit</span><span class="m" id="t86" style="left:1292.2px;top:704.30px;font-size:26.58px;line-height:33px;letter-spacing:-0.016px;">(</span><div class="hint" style="left:1311.7px;top:701px;width:95px;height:36px;"></div><span class="s" id="t87" style="left:1323.2px;top:704.88px;font-size:24px;line-height:30px;color:#7a7a7a;letter-spacing:0.185px;">status:</span><span class="m" id="t88" style="left:1411.2px;top:704.30px;font-size:26.58px;line-height:33px;color:#1750eb;letter-spacing:-0.016px;">0</span><span class="m" id="t89" style="left:1427.2px;top:704.30px;font-size:26.58px;line-height:33px;letter-spacing:-0.008px;">);</span><span class="m" id="t90" style="left:988.2px;top:748.30px;font-size:26.58px;line-height:33px;letter-spacing:-0.003px;">    }</span><span class="m" id="t91" style="left:988.2px;top:836.30px;font-size:26.58px;line-height:33px;letter-spacing:-0.016px;">}</span><div style="left:1195.5px;top:306px;width:3.5px;height:36.5px;background:#000;"></div><div style="left:1048px;top:391px;width:1.5px;height:352px;background:#d9d9d9;"></div><svg style="left:2553px;top:427px;" width="82" height="6" viewBox="0 0 82 6"><path d="M0 4l5 -3.500l5 3.500l5 -3.500l5 3.500l5 -3.500l5 3.500l5 -3.500l5 3.500l5 -3.500l5 3.500l5 -3.500l5 3.500l5 -3.500l5 3.500l5 -3.500l5 3.500" fill="none" stroke="#9ccf9c" stroke-width="1.300"/></svg><svg style="left:1872px;top:603px;" width="82" height="6" viewBox="0 0 82 6"><path d="M0 4l5 -3.500l5 3.500l5 -3.500l5 3.500l5 -3.500l5 3.500l5 -3.500l5 3.500l5 -3.500l5 3.500l5 -3.500l5 3.500l5 -3.500l5 3.500l5 -3.500l5 3.500" fill="none" stroke="#9ccf9c" stroke-width="1.300"/></svg><svg style="left:920px;top:312px;" width="20" height="24" viewBox="0 0 20 24"><path d="M1 1L18 12L1 23z" fill="#59A869"/></svg><svg style="left:920px;top:356px;" width="20" height="24" viewBox="0 0 20 24"><path d="M1 1L18 12L1 23z" fill="#59A869"/></svg><svg style="left:967px;top:227px;" width="18" height="18" viewBox="0 0 18 18"><rect x="1" y="1" width="16" height="16" fill="#fff" stroke="#c9c9c9" stroke-width="1.500"/><path d="M4.500 9h9M9 4.500v9" stroke="#c0c0c0" stroke-width="1.500"/></svg><svg style="left:967px;top:361px;" width="18" height="25" viewBox="0 0 18 25"><path d="M1 1h16v14.500l-8 8l-8-8z" fill="#fff" stroke="#c9c9c9" stroke-width="1.500"/><path d="M4.500 9h9" stroke="#c0c0c0" stroke-width="1.500"/></svg><svg style="left:967px;top:753px;" width="18" height="22" viewBox="0 0 18 22"><path d="M1 21h16V8L9 1L1 8z" fill="#fff" stroke="#c9c9c9" stroke-width="1.500"/><path d="M4.500 13h9" stroke="#c0c0c0" stroke-width="1.500"/></svg><div class="redbox" style="left:864.4px;top:296px;width:114.8px;height:45px;"></div></main>
<section id="run-tool-window"><div style="left:38px;top:1218px;width:3198px;height:56px;background:#f2f2f2;border-top:2px solid #d1d1d1;border-bottom:1.500px solid #d1d1d1;"></div><span class="s" id="t92" style="left:51px;top:1231.66px;font-size:25.5px;line-height:32px;color:#1a1a1a;letter-spacing:-1.219px;">Run:</span><svg style="left:139px;top:1231px" width="32" height="32"><use href="#runCfgPale"/></svg><span class="s" id="t93" style="left:179.5px;top:1231.66px;font-size:25.5px;line-height:32px;color:#1a1a1a;letter-spacing:0.023px;">Application</span><svg style="left:311px;top:1232px" width="32" height="32"><use href="#closeX"/></svg><svg style="left:380.5px;top:1231px" width="32" height="32"><use href="#runCfg"/></svg><span class="s" id="t94" style="left:422px;top:1231.66px;font-size:25.5px;line-height:32px;color:#1a1a1a;letter-spacing:-0.011px;">org.apache.dubbo.samples.client.Application</span><svg style="left:933.5px;top:1232px" width="32" height="32"><use href="#closeX"/></svg><div style="left:356.5px;top:1268px;width:622.5px;height:6px;background:#a3adbf;border-radius:3px 3px 0 0;"></div><svg style="left:3143px;top:1229.5px" width="33" height="33"><use href="#gear"/></svg><div style="left:3200px;top:1244px;width:24px;height:4.5px;background:#6E6E6E;"></div><div style="left:38px;top:1274px;width:116px;height:564px;background:#f2f2f2;"></div><div style="left:94.5px;top:1274px;width:1.5px;height:564px;background:#d6d6d6;"></div><div style="left:152.5px;top:1274px;width:1.5px;height:564px;background:#d6d6d6;"></div><svg style="left:52px;top:1287px;" width="32" height="32" viewBox="0 0 32 32"><path d="M18.500 9.750H12.900A8.450 8.450 0 1 0 14.500 26.500" fill="none" stroke="#59A869" stroke-width="4.600"/><path d="M18 1.500L28.700 9L18 16.500z" fill="#59A869"/><rect x="15.900" y="19.250" width="10.400" height="9.800" fill="#6E6E6E"/></svg><svg style="left:52px;top:1339px;" width="30" height="30" viewBox="0 0 30 30"><path d="M2 25L16 11" stroke="#6E6E6E" stroke-width="6"/><path d="M28 5.500l-5.500 5.500l-4.500-1l-1-4.500L22.500 0a8.500 8.500 0 1 0 5.500 5.500z" fill="#6E6E6E"/></svg><div style="left:46px;top:1386.5px;width:40px;height:1.5px;background:#d1d1d1;"></div><div style="left:56px;top:1410px;width:20px;height:20px;background:#DB5860;"></div><svg style="left:52px;top:1459px;" width="28" height="26" viewBox="0 0 28 26"><path d="M0 6h7l2.500-4.500h9L21 6h7v20H0z" fill="#6E6E6E"/><circle cx="14" cy="15" r="6.500" fill="#f2f2f2"/><circle cx="14" cy="15" r="3.200" fill="#6E6E6E"/></svg><svg style="left:51px;top:1509px;" width="30" height="30" viewBox="0 0 30 30"><path d="M6 8V2h22v26H6v-6" fill="none" stroke="#6E6E6E" stroke-width="3"/><path d="M1 15h17" stroke="#DB5860" stroke-width="3.200"/><path d="M11.500 7.500L19 15l-7.500 7.500" fill="none" stroke="#DB5860" stroke-width="3.200"/></svg><div style="left:46px;top:1556.5px;width:40px;height:1.5px;background:#d1d1d1;"></div><svg style="left:54px;top:1580px;" width="24" height="20" viewBox="0 0 24 20"><g fill="#6E6E6E"><rect x="0" y="0" width="11" height="8.500"/><rect x="13" y="0" width="11" height="8.500"/><rect x="0" y="11" width="24" height="9"/></g></svg><div style="left:46px;top:1622.5px;width:40px;height:1.5px;background:#d1d1d1;"></div><svg style="left:51px;top:1641px;" width="30" height="30" viewBox="0 0 30 30"><path d="M17 1l12 12l-5 1l-5.500 5.500l-1 6.500L6 14.500l6.500-1L18 8z" fill="#6E6E6E"/><path d="M1 29L11 19" stroke="#6E6E6E" stroke-width="3"/></svg><svg style="left:112px;top:1291px;" width="24" height="26" viewBox="0 0 24 26"><path d="M12 25V4" stroke="#6E6E6E" stroke-width="3"/><path d="M2.500 12.500L12 3l9.500 9.500" fill="none" stroke="#6E6E6E" stroke-width="3"/></svg><svg style="left:112px;top:1343px;" width="24" height="26" viewBox="0 0 24 26"><path d="M12 1v21" stroke="#6E6E6E" stroke-width="3"/><path d="M2.500 13.500L12 23l9.500-9.500" fill="none" stroke="#6E6E6E" stroke-width="3"/></svg><svg style="left:110px;top:1395px;" width="28" height="30" viewBox="0 0 28 30"><path d="M1 2.500h24M1 13h19a5 5 0 0 1 0 10h-5M1 23h6" fill="none" stroke="#6E6E6E" stroke-width="3"/><path d="M19 17l-6 6l6 6" fill="none" stroke="#6E6E6E" stroke-width="3"/></svg><div style="left:102px;top:1439px;width:44px;height:44px;background:#cfcfcf;border-radius:7px;"></div><svg style="left:111px;top:1446px;" width="26" height="30" viewBox="0 0 26 30"><path d="M1 10h8M1 17h8M1 27.500h24" stroke="#6E6E6E" stroke-width="3"/><path d="M18 1v16" stroke="#6E6E6E" stroke-width="3"/><path d="M11.500 11.500L18 18l6.500-6.500" fill="none" stroke="#6E6E6E" stroke-width="3"/></svg><svg style="left:110px;top:1499px;" width="28" height="28" viewBox="0 0 28 28"><g fill="#6E6E6E"><rect x="6" y="0" width="16" height="6"/><path d="M0 8h28v13h-5v-5H5v5H0z"/><path d="M6 18h16v10H6zM9 21v4h10v-4z" fill-rule="evenodd"/></g><circle cx="24" cy="11.500" r="1.500" fill="#f2f2f2"/></svg><svg style="left:113px;top:1549px;" width="22" height="28" viewBox="0 0 22 28"><g fill="#6E6E6E"><path d="M7 0h8v2.500h6v3H1v-3h6z"/><path d="M2.500 8h17v17a3 3 0 0 1-3 3h-11a3 3 0 0 1-3-3z"/></g></svg><div style="left:154px;top:1274px;width:3082px;height:564px;background:#fff;overflow:hidden;"><span class="m" id="t95" style="left:21.5px;top:-5.70px;font-size:26.58px;line-height:33px;color:#080808;letter-spacing:-0.001px;">16:02:24.205 [main] DEBUG org.apache.dubbo.config.ServiceConfig -  [DUBBO] No valid ip found from environment, try to get local host., dubbo version: 3.1.6, current host: 30.221.128.96</span><span class="m" id="t96" style="left:21.5px;top:38.30px;font-size:26.58px;line-height:33px;color:#080808;letter-spacing:-0.001px;">16:02:24.207 [main] WARN org.apache.dubbo.config.ServiceConfig -  [DUBBO] Use random available port(20881) for protocol dubbo, dubbo version: 3.1.6, current host: 30.221.128.96, error code: 5-2. This may be caused by </span><span class="m" id="t97" style="left:21.5px;top:82.30px;font-size:26.58px;line-height:33px;color:#080808;letter-spacing:-0.001px;">16:02:24.245 [main] INFO org.apache.dubbo.config.ServiceConfig -  [DUBBO] Export dubbo service org.apache.dubbo.metadata.MetadataService to local registry url : injvm://127.0.0.1/org.apache.dubbo.metadata.MetadataService</span><span class="m" id="t98" style="left:21.5px;top:126.30px;font-size:26.58px;line-height:33px;color:#080808;letter-spacing:-0.001px;">16:02:24.245 [main] INFO org.apache.dubbo.config.ServiceConfig -  [DUBBO] Export dubbo service org.apache.dubbo.metadata.MetadataService to url dubbo://30.221.128.96:20881/org.apache.dubbo.metadata.MetadataService</span><span class="m" id="t99" style="left:21.5px;top:170.30px;font-size:26.58px;line-height:33px;color:#080808;letter-spacing:-0.001px;">16:02:24.251 [main] INFO org.apache.dubbo.remoting.transport.AbstractServer -  [DUBBO] Start NettyServer bind /0.0.0.0:20881, export /30.221.128.96:20881, dubbo version: 3.1.6, current host: 30.221.128.96</span><span class="m" id="t100" style="left:21.5px;top:214.30px;font-size:26.58px;line-height:33px;color:#080808;letter-spacing:-0.001px;">16:02:24.252 [main] INFO org.apache.dubbo.config.metadata.ConfigurableMetadataServiceExporter -  [DUBBO] The MetadataService exports urls : [dubbo://30.221.128.96:20881/org.apache.dubbo.metadata.MetadataService</span><span class="m" id="t101" style="left:21.5px;top:258.30px;font-size:26.58px;line-height:33px;color:#080808;letter-spacing:-0.001px;">16:02:24.252 [main] INFO org.apache.dubbo.registry.client.metadata.ServiceInstanceMetadataUtils -  [DUBBO] Start registering instance address to registry., dubbo version: 3.1.6, current host: 30.221.128.96</span><span class="m" id="t102" style="left:21.5px;top:302.30px;font-size:26.58px;line-height:33px;color:#080808;letter-spacing:-0.001px;">16:02:24.257 [main] WARN org.apache.dubbo.registry.client.AbstractServiceDiscovery -  [DUBBO] No valid instance found, stop registering instance address to registry., dubbo version: 3.1.6, current host: 30.221.128.96</span><span class="m" id="t103" style="left:21.5px;top:346.30px;font-size:26.58px;line-height:33px;color:#080808;letter-spacing:-0.001px;">16:02:24.257 [main] INFO org.apache.dubbo.config.deploy.DefaultApplicationDeployer -  [DUBBO] Dubbo Application[1.1](demo-consumer) is ready., dubbo version: 3.1.6, current host: 30.221.128.96</span><span class="m" id="t104" style="left:21.5px;top:390.30px;font-size:26.58px;line-height:33px;color:#080808;letter-spacing:-0.001px;">16:02:24.266 [main] DEBUG org.apache.dubbo.config.spring.ReferenceBean$DubboReferenceLazyInitTargetSource - Initializing lazy target object</span><span class="m" id="t105" style="left:21.5px;top:434.30px;font-size:26.58px;line-height:33px;color:#080808;letter-spacing:-0.001px;">16:02:24.300 [main] DEBUG org.apache.dubbo.rpc.protocol.dubbo.DecodeableRpcResult -  [DUBBO] Decoding in thread -- [main#1], dubbo version: 3.1.6, current host: 30.221.128.96</span><span class="m" id="t106" style="left:21.5px;top:478.30px;font-size:26.58px;line-height:33px;color:#080808;letter-spacing:-0.001px;">16:02:24.300 [main] DEBUG org.apache.dubbo.remoting.transport.DecodeHandler -  [DUBBO] Decode decodeable message org.apache.dubbo.rpc.protocol.dubbo.DecodeableRpcResult, dubbo version: 3.1.6, current host: 30.221.128.96</span><span class="m" id="t107" style="left:21.5px;top:522.30px;font-size:26.58px;line-height:33px;color:#080808;letter-spacing:-0.001px;">Receive result ======&gt; hi, dubbo</span></div><div class="redbox" style="left:161px;top:1789px;width:568.3px;height:41px;"></div><div style="left:3220px;top:1826px;width:14px;height:20px;background:#959595;border-radius:7px;"></div></section></div>
</body></html>
